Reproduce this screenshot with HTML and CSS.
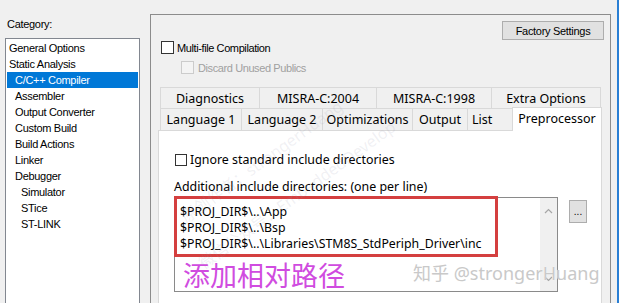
FILE: index.html
```html
<!DOCTYPE html>
<html lang="zh">
<head>
<meta charset="utf-8">
<title>Options</title>
<link rel="stylesheet" href="styles.css">
</head>
<body>
<div class="left">
  <div class="cat-label">Category:</div>
  <div class="list">
    <div class="item l0">General Options</div>
    <div class="item l0">Static Analysis</div>
    <div class="item l1 sel">C/C++ Compiler</div>
    <div class="item l1">Assembler</div>
    <div class="item l1">Output Converter</div>
    <div class="item l1">Custom Build</div>
    <div class="item l1">Build Actions</div>
    <div class="item l1">Linker</div>
    <div class="item l1">Debugger</div>
    <div class="item l2">Simulator</div>
    <div class="item l2">STice</div>
    <div class="item l2">ST-LINK</div>
  </div>
</div>
<div class="panel">
  <div class="btn-row"><div class="btn factory">Factory Settings</div></div>
  <div class="chk-row r1"><span class="box"></span><span class="chk-text">Multi-file Compilation</span></div>
  <div class="chk-row r2 disabled"><span class="box"></span><span class="chk-text">Discard Unused Publics</span></div>
  <div class="tabs">
    <div class="tab-row row1">
      <div class="tab w99">Diagnostics</div>
      <div class="tab w117">MISRA-C:2004</div>
      <div class="tab w115">MISRA-C:1998</div>
      <div class="tab w110 last">Extra Options</div>
    </div>
    <div class="tab-row row2">
      <div class="tab w81">Language 1</div>
      <div class="tab w81">Language 2</div>
      <div class="tab w90">Optimizations</div>
      <div class="tab w55">Output</div>
      <div class="tab w45 list-tab">List</div>
      <div class="tab sel-tab">Preprocessor</div>
    </div>
    <div class="page">
      <div class="ign-row"><span class="box"></span><span class="ign-text">Ignore standard include directories</span></div>
      <div class="add-label">Additional include directories: (one per line)</div>
      <div class="edit-row">
        <div class="editbox">
          <div class="lines">
            <div class="line">$PROJ_DIR$\..\App</div>
            <div class="line">$PROJ_DIR$\..\Bsp</div>
            <div class="line">$PROJ_DIR$\..\Libraries\STM8S_StdPeriph_Driver\inc</div>
          </div>
          <div class="vscroll">
            <svg class="arrow" width="9" height="6" viewBox="0 0 9 6"><path d="M1 5 L4.5 1.5 L8 5" fill="none" stroke="#a6a6a6" stroke-width="1.2"/></svg>
            <svg class="arrow" width="9" height="6" viewBox="0 0 9 6"><path d="M1 1 L4.5 4.5 L8 1" fill="none" stroke="#a6a6a6" stroke-width="1.2"/></svg>
          </div>
          <div class="red-mark"></div>
          <div class="note">添加相对路径</div>
        </div>
        <div class="btn dots">...</div>
      </div>
    </div>
  </div>
</div>
<div class="edge"></div>
<div class="wm wm1">原创作者：strongerHuang</div>
<div class="wm wm2">微信公众号：EmbeddedDevelop</div>
<div class="zhihu">知乎 @strongerHuang</div>
</body>
</html>
```

FILE: styles.css
```css
html, body {
  margin: 0;
  padding: 0;
}
body {
  width: 619px;
  height: 303px;
  overflow: hidden;
  background: #f0f0f0;
  display: flex;
  align-items: flex-start;
  position: relative;
  font-family: "Liberation Sans", Arial, sans-serif;
  font-size: 11px;
  color: #000;
}
.left {
  width: 150px;
  flex: none;
  box-sizing: border-box;
  padding: 18px 0 0 5px;
}
.cat-label {
  height: 13px;
  line-height: 13px;
  padding-left: 2px;
  letter-spacing: -0.3px;
}
.list {
  margin-top: 7px;
  width: 135px;
  height: 280px;
  box-sizing: border-box;
  border: 1px solid #828790;
  background: #fff;
  padding-top: 1px;
}
.item {
  height: 16px;
  line-height: 16px;
  margin: 0 1px;
  letter-spacing: -0.3px;
  white-space: nowrap;
}
.l0 { padding-left: 2px; }
.l1 { padding-left: 8px; }
.l2 { padding-left: 14px; }
.item.sel {
  background: #0078d7;
  color: #fff;
}
.panel {
  margin-top: 14px;
  width: 461px;
  height: 300px;
  flex: none;
  box-sizing: border-box;
  border: 1px solid #8c8c8c;
}
.btn-row {
  display: flex;
  justify-content: flex-end;
  padding: 6px 6px 0 0;
}
.btn {
  box-sizing: border-box;
  background: #e1e1e1;
  border: 1px solid #adadad;
  display: flex;
  align-items: center;
  justify-content: center;
}
.factory {
  width: 102px;
  height: 19px;
  letter-spacing: -0.3px;
}
.chk-row {
  display: flex;
  align-items: center;
  height: 13px;
}
.chk-row.r1 { margin-top: 1px; padding-left: 10px; }
.chk-row.r2 { margin-top: 7px; padding-left: 30px; }
.box {
  width: 13px;
  height: 13px;
  box-sizing: border-box;
  border: 1px solid #333;
  background: #fff;
  flex: none;
}
.chk-text {
  margin-left: 3px;
  letter-spacing: -0.4px;
  white-space: nowrap;
}
.disabled .box {
  border-color: #cccccc;
  background: #f4f4f4;
}
.disabled .chk-text {
  color: #a0a0a0;
  margin-left: 4px;
}
.tabs {
  margin-top: 13px;
  font-family: "Noto Sans", "Open Sans", sans-serif;
  font-size: 12.5px;
}
.tab-row {
  display: flex;
  margin-left: 9px;
}
.row1 { height: 21px; }
.row2 { height: 22px; }
.tab {
  box-sizing: border-box;
  border-top: 1px solid #d9d9d9;
  border-left: 1px solid #d9d9d9;
  background: #f0f0f0;
  display: flex;
  align-items: center;
  justify-content: center;
  white-space: nowrap;
  flex: none;
}
.tab.last { border-right: 1px solid #d9d9d9; }
.w99 { width: 99px; }
.w117 { width: 117px; }
.w115 { width: 115px; }
.w110 { width: 110px; }
.w81 { width: 81px; }
.w90 { width: 90px; }
.w55 { width: 55px; }
.w45 { width: 45px; }
.list-tab {
  justify-content: flex-start;
  padding-left: 4px;
}
.sel-tab {
  width: 90px;
  height: 24px;
  margin-top: -1px;
  background: #fff;
  border-right: 1px solid #d9d9d9;
  position: relative;
  z-index: 1;
  align-items: flex-start;
  padding-top: 2px;
}
.page {
  margin-left: 7px;
  width: 444px;
  height: 190px;
  box-sizing: border-box;
  border: 1px solid #d9d9d9;
  background: #fff;
  font-size: 12.4px;
}
.ign-row {
  display: flex;
  align-items: center;
  margin-top: 22px;
  padding-left: 16px;
  height: 13px;
}
.ign-row .box { width: 12px; height: 12px; }
.ign-text {
  margin-left: 3px;
  width: 208px;
  overflow: hidden;
  white-space: nowrap;
  line-height: 16px;
}
.add-label {
  margin-top: 13px;
  padding-left: 15px;
  line-height: 16px;
  white-space: nowrap;
}
.edit-row {
  display: flex;
  align-items: flex-start;
  margin-top: 2px;
  padding-left: 15px;
}
.editbox {
  position: relative;
  width: 384px;
  height: 95px;
  box-sizing: border-box;
  border: 1px solid #8a8a8a;
  background: #fff;
  display: flex;
}
.lines {
  flex: 1;
  padding: 6px 0 0 5px;
  font-size: 12.3px;
}
.line {
  height: 16px;
  line-height: 16px;
  white-space: nowrap;
}
.vscroll {
  width: 17px;
  background: #f0f0f0;
  display: flex;
  flex-direction: column;
  justify-content: space-between;
  align-items: center;
  padding: 10px 0 9px;
  box-sizing: border-box;
}
.red-mark {
  position: absolute;
  left: -1px;
  top: -2px;
  width: 324px;
  height: 61px;
  box-sizing: border-box;
  border: 3px solid #d43f3f;
}
.note {
  position: absolute;
  left: 8px;
  top: 62px;
  font-family: "Noto Sans CJK SC", sans-serif;
  font-size: 27px;
  line-height: 30px;
  color: #d04ce0;
  white-space: nowrap;
}
.dots {
  margin-left: 11px;
  margin-top: 3px;
  width: 18px;
  height: 23px;
  font-size: 10px;
  font-family: "Liberation Sans", Arial, sans-serif;
  align-items: center;
}
.edge {
  position: absolute;
  right: 0;
  top: 0;
  width: 2px;
  height: 303px;
  background: #2a7fd4;
}
.wm {
  position: absolute;
  font-family: "Noto Sans", "Noto Sans CJK SC", sans-serif;
  font-size: 16px;
  color: rgba(150, 150, 170, 0.14);
  white-space: nowrap;
  transform-origin: left center;
  transform: rotate(-36deg);
}
.wm1 { left: 182px; top: 206px; }
.wm2 { left: 200px; top: 252px; }
.zhihu {
  position: absolute;
  left: 413px;
  top: 259px;
  font-family: "Noto Sans", "Noto Sans CJK SC", sans-serif;
  font-size: 18px;
  color: #c9c9c9;
  white-space: nowrap;
  text-shadow: 0 0 1px #fff;
}
```
